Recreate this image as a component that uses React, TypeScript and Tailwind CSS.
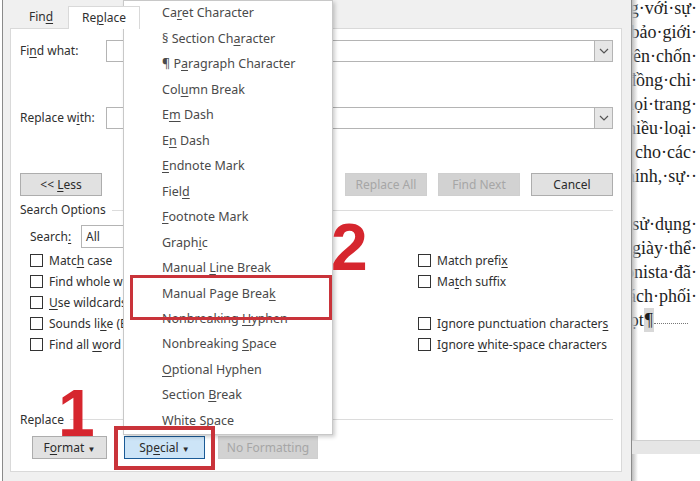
import React from "react";

const U = ({ children }: { children: React.ReactNode }) => (
  <span className="underline underline-offset-[2px] decoration-[1px]">{children}</span>
);

const Chevron = () => (
  <svg width="10" height="6" viewBox="0 0 10 6">
    <path d="M1 1 L5 5 L9 1" fill="none" stroke="#555" strokeWidth="1.2" />
  </svg>
);

const Combo = () => (
  <div className="flex-1 h-[22px] flex border border-[#b4b4b4] bg-white">
    <div className="flex-1" />
    <div className="w-[18px] h-full flex items-center justify-center bg-[#e6e6e6] border-l border-[#b4b4b4]">
      <Chevron />
    </div>
  </div>
);

const Btn = ({
  w,
  children,
  disabled,
  className = "",
}: {
  w: string;
  children: React.ReactNode;
  disabled?: boolean;
  className?: string;
}) => (
  <div
    className={
      "h-[23px] flex items-center justify-center " +
      w +
      " " +
      (disabled
        ? "bg-[#d2d2d2] border border-[#cfcfcf] text-[#a6a6a6]"
        : "bg-[#e1e1e1] border border-[#adadad] text-[#2b2b2b]") +
      " " +
      className
    }
  >
    <span className="whitespace-pre">{children}</span>
  </div>
);

const Check = ({ children }: { children: React.ReactNode }) => (
  <div className="h-[21px] flex items-center gap-[6px] whitespace-nowrap">
    <div className="w-[13px] h-[13px] border border-[#333] bg-white shrink-0" />
    <span>{children}</span>
  </div>
);

const menuItems: React.ReactNode[] = [
  <>Ca<U>r</U>et Character</>,
  <>§ Section Ch<U>a</U>racter</>,
  <>¶ P<U>a</U>ragraph Character</>,
  <>Col<U>u</U>mn Break</>,
  <>E<U>m</U> Dash</>,
  <>E<U>n</U> Dash</>,
  <><U>E</U>ndnote Mark</>,
  <>Fiel<U>d</U></>,
  <><U>F</U>ootnote Mark</>,
  <>Graph<U>i</U>c</>,
  <>Manual <U>L</U>ine Break</>,
  <>Manual Page Brea<U>k</U></>,
  <>Nonbreaking <U>H</U>yphen</>,
  <>Nonbreaking <U>S</U>pace</>,
  <><U>O</U>ptional Hyphen</>,
  <>Section <U>B</U>reak</>,
  <><U>W</U>hite Space</>,
];

const docLines = [
  "trang·với·sự·",
  "sự·bảo·giới·",
  "trên·chốn·",
  "cộng·đồng·chi·",
  "mọi·trang·",
  "nhiều·loại·",
  "cho·các·",
  "chính,·sự··",
  "",
  "sử·dụng·",
  "giày·thể·",
  "Fashionista·đã·",
  "cách·phối·",
];

export default function App() {
  return (
    <div
      className="relative w-[700px] h-[481px] overflow-hidden bg-white flex text-[12px] text-[#2f2f2f]"
      style={{ fontFamily: '"Noto Sans", "Open Sans", sans-serif' }}
    >
      {/* Dialog */}
      <div className="ml-[2px] w-[630px] h-full bg-[#f0f0f0] border-l border-r border-[#8a8a8a] pl-[7px] pr-[9px] flex flex-col shrink-0">
        {/* tabs */}
        <div className="h-[28px] flex items-end">
          <div className="w-[4px]" />
          <div className="w-[54px] h-[23px] flex items-center justify-center">
            <span>
              Fin<U>d</U>
            </span>
          </div>
          <div className="w-[72px] h-[23px] bg-white border-l border-t border-r border-[#d9d9d9] flex items-center justify-center -mb-px relative z-10">
            <span>
              Re<U>p</U>lace
            </span>
          </div>
        </div>
        {/* panel */}
        <div className="h-[444px] bg-white border border-[#d9d9d9] pl-[9px] pr-[8px] flex flex-col">
          <div className="mt-[11px] h-[22px] flex items-center">
            <div className="w-[86px]">
              Fi<U>n</U>d what:
            </div>
            <Combo />
          </div>
          <div className="mt-[45px] h-[22px] flex items-center">
            <div className="w-[86px]">
              Replace w<U>i</U>th:
            </div>
            <Combo />
          </div>
          <div className="mt-[44px] h-[23px] flex items-center">
            <Btn w="w-[82px]">
              {"<< "}
              <U>L</U>ess
            </Btn>
            <div className="ml-auto flex gap-[11px]">
              <Btn w="w-[82px]" disabled>
                Replace All
              </Btn>
              <Btn w="w-[82px]" disabled>
                Find Next
              </Btn>
              <Btn w="w-[82px]">Cancel</Btn>
            </div>
          </div>
          <div className="mt-[6px] h-[16px] flex items-center">
            <span>Search Options</span>
            <div className="flex-1 h-px bg-[#dcdcdc] ml-[6px]" />
          </div>
          <div className="mt-[7px] h-[23px] flex items-center pl-[10px]">
            <div className="w-[51px]">
              Search<U>:</U>
            </div>
            <div className="w-[160px] h-[23px] border border-[#b4b4b4] bg-white flex items-center pl-[4px]">
              All
            </div>
          </div>
          <div className="mt-[2px] pl-[10px] grid grid-cols-[388px_1fr]">
            <div className="flex flex-col">
              <Check>
                Matc<U>h</U> case
              </Check>
              <Check>
                Find whole words onl<U>y</U>
              </Check>
              <Check>
                <U>U</U>se wildcards
              </Check>
              <Check>
                Sounds li<U>k</U>e (English)
              </Check>
              <Check>
                Find all <U>w</U>ord forms (English)
              </Check>
            </div>
            <div className="flex flex-col">
              <Check>
                Match prefi<U>x</U>
              </Check>
              <Check>
                Ma<U>t</U>ch suffix
              </Check>
              <div className="h-[21px]" />
              <Check>
                Ignore punctuation character<U>s</U>
              </Check>
              <Check>
                Ignore <U>w</U>hite-space characters
              </Check>
            </div>
          </div>
          <div className="mt-[57px] h-[16px] flex items-center">
            <span>Replace</span>
            <div className="flex-1 h-px bg-[#dcdcdc] ml-[6px] mt-[-2px]" />
          </div>
          <div className="mt-[8px] h-[23px] flex items-center pl-[12px]">
            <Btn w="w-[75px]">
              F<U>o</U>rmat <span className="text-[8px] align-middle">▼</span>
            </Btn>
            <div className="ml-[17px] w-[81px] h-[23px] flex items-center justify-center bg-[#cce4f7] border border-[#1a5a96] text-[#2b2b2b]">
              <span className="whitespace-pre">
                Sp<U>e</U>cial <span className="text-[8px] align-middle">▼</span>
              </span>
            </div>
            <Btn w="w-[100px]" disabled className="ml-[13px]">
              No Formatting
            </Btn>
          </div>
        </div>
        <div className="flex-1" />
      </div>

      {/* Document on right */}
      <div
        className="relative flex-1 h-full overflow-hidden bg-white"
        style={{ fontFamily: '"Liberation Serif", "DejaVu Serif", serif' }}
      >
        <div className="mt-[-4px] flex flex-col items-end pr-[3px] text-[18px] leading-[24px] text-[#1e1e1e]">
          {docLines.map((l, i) => (
            <div key={i} className="h-[24px] whitespace-nowrap">
              {l}
            </div>
          ))}
          <div className="h-[24px] whitespace-nowrap flex items-center pr-[9px]">
            <span>hợp·mọt</span>
            <span className="bg-[#d8d8d8] px-px">¶</span>
            <span className="w-[34px] border-b border-dotted border-[#777] mt-[6px]" />
          </div>
        </div>
        <div className="absolute left-0 top-0 h-full w-[6px] bg-gradient-to-r from-[#bdbdbd] to-transparent" />
        <div className="absolute left-0 right-0 top-[440px] h-[14px] bg-[#e6e6e6] border-t border-[#d0d0d0]" />
      </div>

      {/* Special dropdown menu */}
      <div className="absolute left-[123px] top-0 w-[210px] h-[435px] bg-white border border-[#c8c8c8] shadow-[2px_2px_4px_rgba(0,0,0,0.2)] flex flex-col text-[12.5px] text-[#4a4a4a]">
        {menuItems.map((m, i) => (
          <div key={i} className="h-[25.5px] flex items-center pl-[38px] whitespace-nowrap">
            <span className="whitespace-pre">{m}</span>
          </div>
        ))}
      </div>

      {/* annotations */}
      <div className="absolute left-[130px] top-[275px] w-[202px] h-[45px] border-[3px] border-[#c9333a]" />
      <div className="absolute left-[114px] top-[426px] w-[101px] h-[44px] border-[4px] border-[#c9333a]" />
      <div
        className="absolute left-[58px] top-[380px] text-[66px] font-bold leading-none text-[#d6262e]"
        style={{ fontFamily: '"Liberation Sans", Arial, sans-serif' }}
      >
        1
      </div>
      <div
        className="absolute left-[331px] top-[214px] text-[66px] font-bold leading-none text-[#d6262e]"
        style={{ fontFamily: '"Liberation Sans", Arial, sans-serif' }}
      >
        2
      </div>
    </div>
  );
}
